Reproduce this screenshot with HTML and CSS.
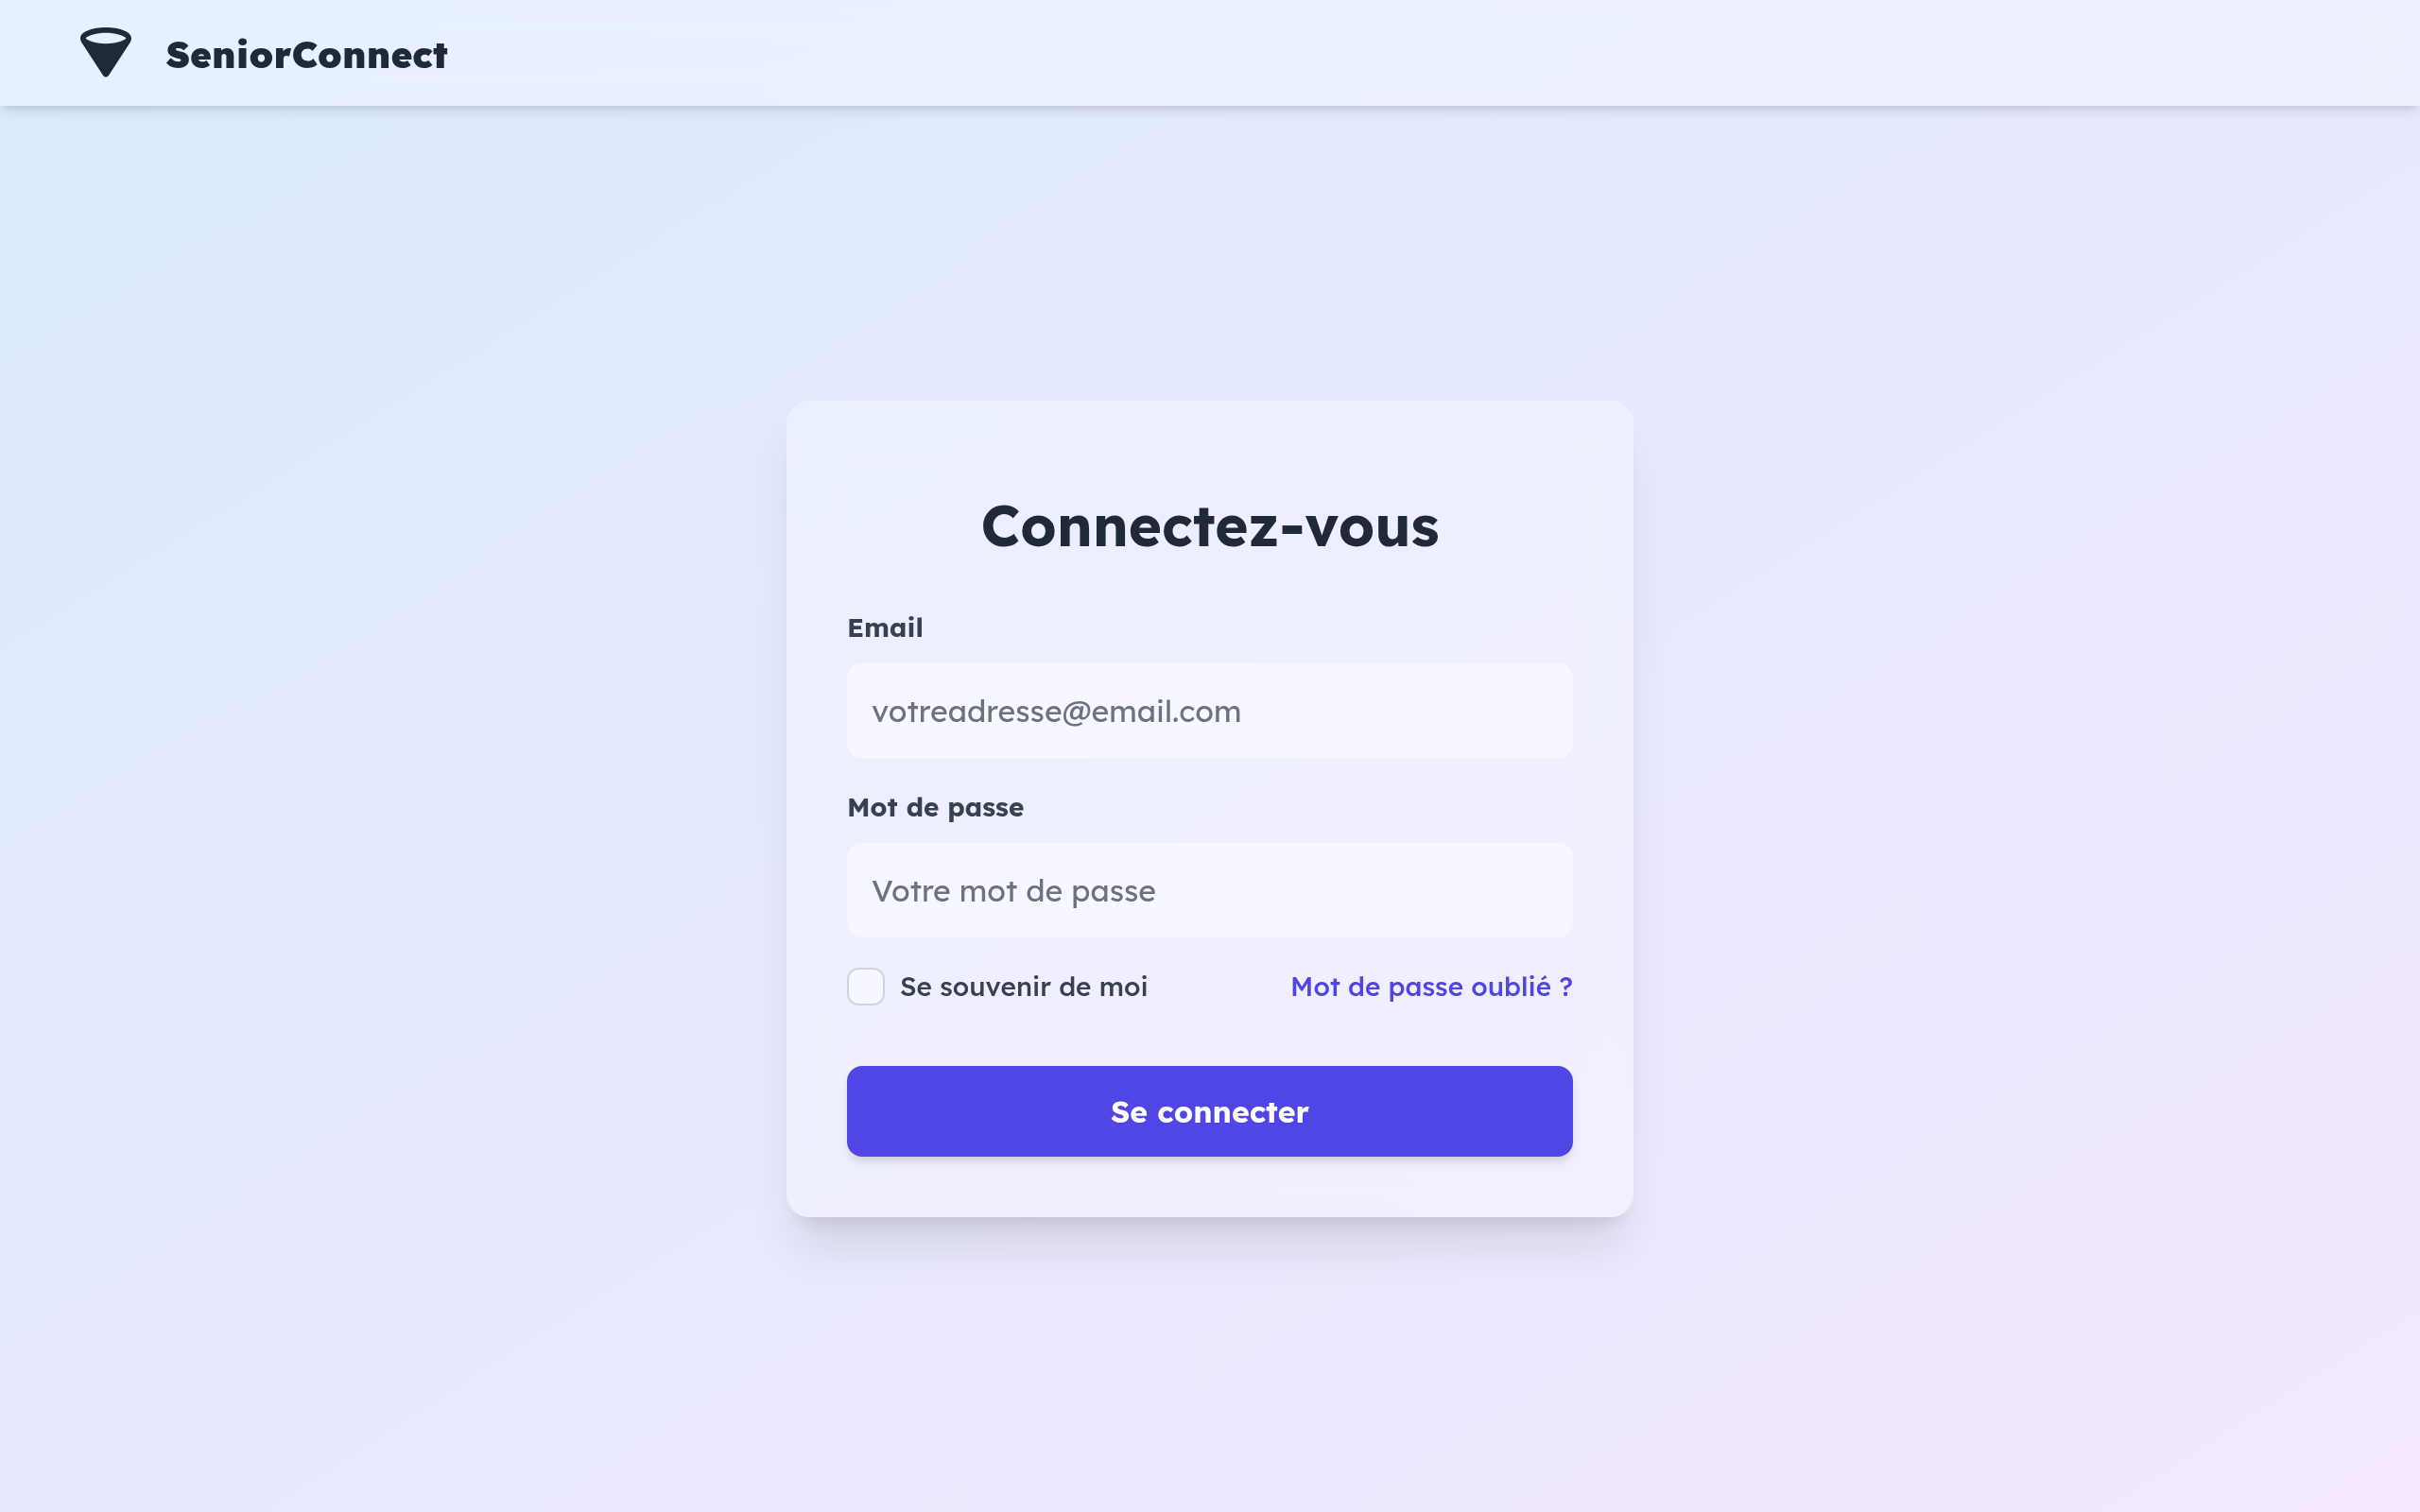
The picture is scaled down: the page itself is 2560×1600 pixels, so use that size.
FILE: index.html
```html
<!DOCTYPE html>
<html lang="fr">
<head>
  <meta charset="utf-8">
  <meta name="viewport" content="width=device-width, initial-scale=1">
  <title>SeniorConnect</title>
  <link rel="stylesheet" href="styles.css">
</head>
<body class="page">
  <header class="topbar">
    <svg class="logo" viewBox="0 0 54 54" aria-hidden="true">
      <path fill="currentColor" fill-rule="evenodd" d="M27 0C41.500 0 54 4.500 54 11.500c0 2-.8 3.800-2 5.600L30 50.800c-1.500 2.400-4.500 2.400-6 0L2 17.100C.8 15.300 0 13.500 0 11.500 0 4.500 12.500 0 27 0zM27 5.800c-9.500 0-18.500 2.500-21.500 5.800C9 15 17.500 17.200 27 17.200s18-2.200 21.500-5.600C45.500 8.300 36.500 5.800 27 5.800z"/>
    </svg>
    <span class="brand">SeniorConnect</span>
  </header>
  <main class="content">
    <form class="card">
      <h1 class="title">Connectez-vous</h1>
      <div class="field">
        <label class="field-label" for="email">Email</label>
        <input class="field-input" id="email" type="email" placeholder="votreadresse@email.com">
      </div>
      <div class="field">
        <label class="field-label" for="password">Mot de passe</label>
        <input class="field-input" id="password" type="password" placeholder="Votre mot de passe">
      </div>
      <div class="options">
        <div class="remember">
          <input class="checkbox" id="remember" type="checkbox">
          <label for="remember">Se souvenir de moi</label>
        </div>
        <a class="forgot" href="#">Mot de passe oublié ?</a>
      </div>
      <button class="submit" type="submit">Se connecter</button>
    </form>
  </main>
</body>
</html>
```

FILE: styles.css
```css
*,
*::before,
*::after {
  box-sizing: border-box;
}

.page {
  display: flex;
  flex-direction: column;
  min-height: 100vh;
  margin: 0;
  background: linear-gradient(to bottom right, #dbeafe, #f3e8ff);
  color: #1f2937;
  font-family: Lexend, Inter, "Liberation Sans", sans-serif;
  font-size: 28px;
  line-height: 40px;
}

.topbar {
  display: flex;
  align-items: center;
  gap: 37px;
  height: 112px;
  padding: 0 85px;
  background: rgba(255, 255, 255, 0.3);
  box-shadow: 0 8px 12px -2px rgba(0, 0, 0, 0.1), 0 4px 8px -4px rgba(0, 0, 0, 0.1);
  backdrop-filter: blur(24px);
}

.logo {
  width: 54px;
  height: 54px;
}

.brand {
  padding-top: 4px;
  font-size: 39px;
  font-weight: 900;
  line-height: 56px;
}

.content {
  display: flex;
  flex: 1;
  align-items: center;
  justify-content: center;
  padding: 32px;
}

.card {
  display: flex;
  flex-direction: column;
  gap: 32px;
  width: 100%;
  max-width: 896px;
  padding: 96px 64px 64px;
  border-radius: 24px;
  background: rgba(255, 255, 255, 0.3);
  box-shadow: 0 40px 50px -10px rgba(0, 0, 0, 0.1), 0 16px 20px -12px rgba(0, 0, 0, 0.1);
  backdrop-filter: blur(24px);
}

.title {
  margin: 0 0 20px;
  font-size: 60px;
  font-weight: 700;
  line-height: 72px;
  text-align: center;
}

.field {
  display: flex;
  flex-direction: column;
  gap: 18px;
}

.field-label {
  color: #374151;
  font-weight: 700;
}

.field-input {
  width: 100%;
  height: 100px;
  padding: 0 26px;
  border: 0;
  border-radius: 16px;
  background: rgba(255, 255, 255, 0.5);
  color: #1f2937;
  font: inherit;
  font-size: 32px;
}

.field-input::placeholder {
  color: #6b7280;
  opacity: 1;
}

.options {
  display: flex;
  align-items: center;
  justify-content: space-between;
  height: 40px;
  margin-bottom: 32px;
  color: #374151;
  font-weight: 500;
}

.remember {
  display: flex;
  align-items: center;
  gap: 16px;
}

.checkbox {
  appearance: none;
  width: 40px;
  height: 40px;
  margin: 0;
  border: 2px solid #d1d5db;
  border-radius: 12px;
  background: rgba(255, 255, 255, 0.5);
}

.checkbox:checked {
  background: #4f46e5;
}

.forgot {
  color: #4f46e5;
  text-decoration: none;
}

.submit {
  height: 96px;
  border: 0;
  border-radius: 16px;
  background: #4f46e5;
  box-shadow: 0 8px 12px -2px rgba(0, 0, 0, 0.1), 0 4px 8px -4px rgba(0, 0, 0, 0.1);
  color: #fff;
  font: inherit;
  font-size: 32px;
  font-weight: 700;
}
```
